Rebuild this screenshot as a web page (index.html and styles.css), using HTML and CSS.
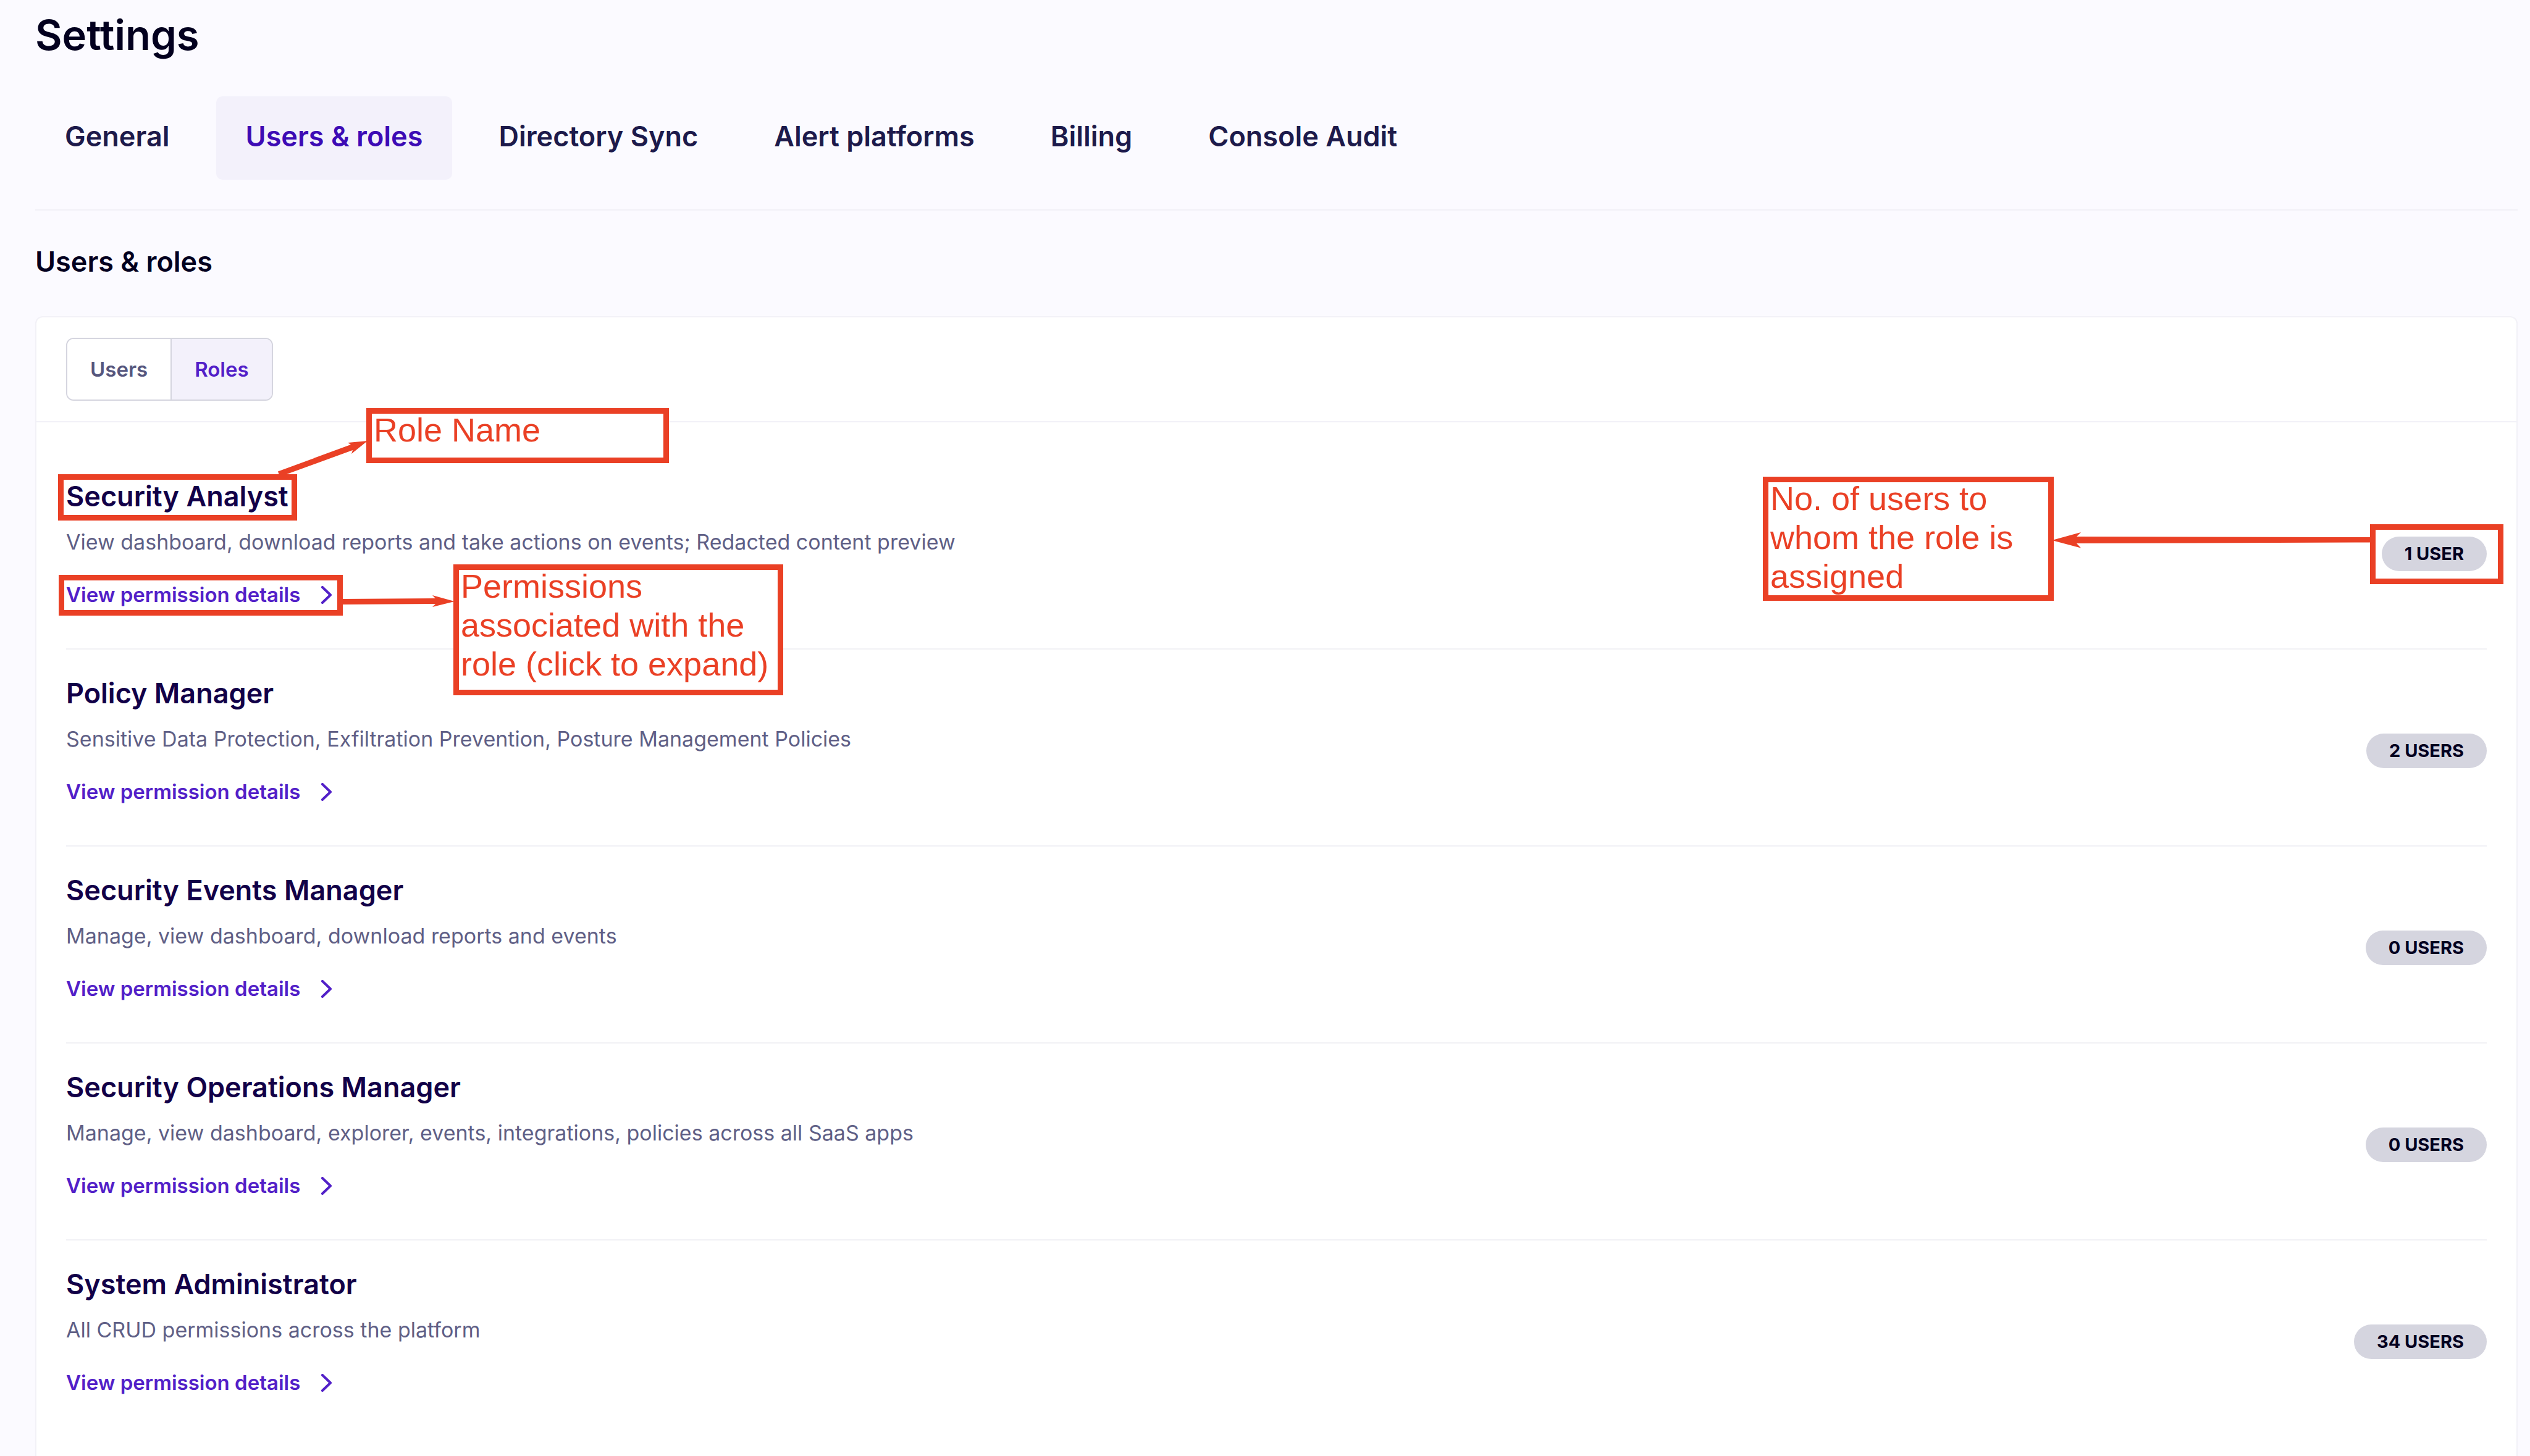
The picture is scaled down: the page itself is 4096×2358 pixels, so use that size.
FILE: index.html
```html
<!DOCTYPE html>
<html lang="en">
<head>
<meta charset="utf-8">
<meta name="viewport" content="width=device-width, initial-scale=1">
<title>Settings - Users &amp; roles</title>
<link rel="stylesheet" href="styles.css">
</head>
<body>
<div class="page">
  <header class="page-header">
    <h1 class="page-title">Settings</h1>
    <nav class="tabs" aria-label="Settings sections">
      <a class="tab" href="#general">General</a>
      <a class="tab tab-active" href="#users-roles" aria-current="page">Users &amp; roles</a>
      <a class="tab" href="#directory-sync">Directory Sync</a>
      <a class="tab" href="#alert-platforms">Alert platforms</a>
      <a class="tab" href="#billing">Billing</a>
      <a class="tab" href="#console-audit">Console Audit</a>
    </nav>
  </header>

  <main class="content">
    <h2 class="section-title">Users &amp; roles</h2>
    <section class="card">
      <div class="card-header">
        <div class="segment">
          <button class="segment-item" type="button">Users</button>
          <button class="segment-item segment-active" type="button" aria-pressed="true">Roles</button>
        </div>
      </div>
      <ul class="roles">
        <li class="role">
          <div class="role-body">
            <h3 class="role-name">Security Analyst</h3>
            <p class="role-text">View dashboard, download reports and take actions on events; Redacted content preview</p>
            <a class="role-link" href="#security-analyst">View permission details
              <svg class="chevron" viewBox="0 0 17 29" aria-hidden="true"><path d="M2 2 15 14.500 2 27"/></svg></a>
          </div>
          <span class="badge">1 USER</span>
        </li>
        <li class="role">
          <div class="role-body">
            <h3 class="role-name">Policy Manager</h3>
            <p class="role-text">Sensitive Data Protection, Exfiltration Prevention, Posture Management Policies</p>
            <a class="role-link" href="#policy-manager">View permission details
              <svg class="chevron" viewBox="0 0 17 29" aria-hidden="true"><path d="M2 2 15 14.500 2 27"/></svg></a>
          </div>
          <span class="badge">2 USERS</span>
        </li>
        <li class="role">
          <div class="role-body">
            <h3 class="role-name">Security Events Manager</h3>
            <p class="role-text">Manage, view dashboard, download reports and events</p>
            <a class="role-link" href="#security-events-manager">View permission details
              <svg class="chevron" viewBox="0 0 17 29" aria-hidden="true"><path d="M2 2 15 14.500 2 27"/></svg></a>
          </div>
          <span class="badge">0 USERS</span>
        </li>
        <li class="role">
          <div class="role-body">
            <h3 class="role-name">Security Operations Manager</h3>
            <p class="role-text">Manage, view dashboard, explorer, events, integrations, policies across all SaaS apps</p>
            <a class="role-link" href="#security-operations-manager">View permission details
              <svg class="chevron" viewBox="0 0 17 29" aria-hidden="true"><path d="M2 2 15 14.500 2 27"/></svg></a>
          </div>
          <span class="badge">0 USERS</span>
        </li>
        <li class="role">
          <div class="role-body">
            <h3 class="role-name">System Administrator</h3>
            <p class="role-text">All CRUD permissions across the platform</p>
            <a class="role-link" href="#system-administrator">View permission details
              <svg class="chevron" viewBox="0 0 17 29" aria-hidden="true"><path d="M2 2 15 14.500 2 27"/></svg></a>
          </div>
          <span class="badge">34 USERS</span>
        </li>
      </ul>
    </section>
  </main>

  <!-- Red call-outs laid over the page -->
  <svg class="arrow arrow-name" viewBox="0 0 150 62" aria-hidden="true"><path d="M3 51.500 121 8 116 5 148 2 122 23 124 17 6 60Z"/></svg>
  <svg class="arrow arrow-link" viewBox="0 0 190 24" aria-hidden="true"><path d="M0 8 155 7 150 2 186 12 150 21 155 16 0 17Z"/></svg>
  <svg class="arrow arrow-users" viewBox="0 0 520 30" aria-hidden="true"><path d="M2 15 49 2 42 9 520 10 520 18.500 42 20 49 27.500Z"/></svg>
  <div class="mark mark-name"></div>
  <div class="mark mark-link"></div>
  <div class="mark mark-users"></div>
  <div class="mark note note-name"><p class="note-text">Role Name</p></div>
  <div class="mark note note-link"><p class="note-text">Permissions<br>associated with the<br>role (click to expand)</p></div>
  <div class="mark note note-users"><p class="note-text">No. of users to<br>whom the role is<br>assigned</p></div>
</div>
</body>
</html>
```
FILE: styles.css
```css
* {
  box-sizing: border-box;
}

body,
h1,
h2,
h3,
p,
ul {
  margin: 0;
  padding: 0;
}

body {
  background: #fbfaff;
  color: #03001f;
  font-family: Inter, "Liberation Sans", sans-serif;
}

a {
  text-decoration: none;
}

.page {
  position: relative;
  display: flex;
  flex-direction: column;
  min-height: 100vh;
  padding: 17px 20px 0 57px;
}

/* Header and tabs */

.page-header {
  padding-bottom: 48px;
  border-bottom: 2px solid #f2f1f7;
}

.page-title {
  margin-bottom: 59px;
  font-size: 67px;
  font-weight: 600;
  line-height: 80px;
}

.tabs {
  display: flex;
  gap: 27px;
}

.tab {
  padding: 37px 48px 42px;
  border-radius: 10px;
  color: #1d1a4b;
  font-size: 45px;
  font-weight: 600;
  line-height: 56px;
}

.tab-active {
  background: #f3f1fb;
  color: #3d0bb5;
}

/* Card */

.content {
  display: flex;
  flex: 1;
  flex-direction: column;
  padding-top: 55px;
}

.section-title {
  margin-bottom: 60px;
  font-size: 45px;
  font-weight: 600;
  line-height: 56px;
}

.card {
  flex: 1;
  border: 2px solid #f2f1f7;
  border-bottom: 0;
  border-radius: 12px 12px 0 0;
  background: #fff;
}

.card-header {
  display: flex;
  padding: 33px 48px;
  border-bottom: 2px solid #f2f1f7;
}

.segment {
  display: flex;
  overflow: hidden;
  border: 2px solid #d5d5df;
  border-radius: 12px;
}

.segment-item {
  padding: 27px 37px;
  border: 0;
  background: #fff;
  color: #56567d;
  font-family: inherit;
  font-size: 33px;
  font-weight: 600;
  line-height: 44px;
}

.segment-active {
  border-left: 2px solid #d5d5df;
  background: #f3f1fb;
  color: #5220c8;
}

/* Role list */

.roles {
  padding: 49px 48px 0;
  list-style: none;
}

.role {
  display: flex;
  align-items: center;
  justify-content: space-between;
  border-bottom: 2px solid #f1f1f5;
}

.role:last-child {
  border-bottom: 0;
}

.role-body {
  display: flex;
  flex-direction: column;
  align-items: flex-start;
  padding: 43px 0 65px;
}

.role-name {
  margin-bottom: 24px;
  color: #120048;
  font-size: 45px;
  font-weight: 600;
  line-height: 56px;
}

.role-text {
  margin-bottom: 41px;
  color: #5f5f86;
  font-size: 34px;
  line-height: 44px;
}

.role-link {
  display: flex;
  align-items: center;
  gap: 34px;
  color: #5220c8;
  font-size: 33px;
  font-weight: 600;
  line-height: 44px;
}

.chevron {
  width: 17px;
  height: 29px;
  fill: none;
  stroke: currentColor;
  stroke-width: 4;
  stroke-linecap: round;
  stroke-linejoin: round;
}

.badge {
  margin-top: 10px;
  padding: 0 37px;
  border-radius: 28px;
  background: #d5d5df;
  font-size: 29px;
  font-weight: 700;
  line-height: 56px;
}

/* Call-outs */

.mark {
  position: absolute;
  border: 9px solid #ea4025;
}

.mark-name {
  top: 768px;
  left: 94px;
  width: 387px;
  height: 75px;
}

.mark-link {
  top: 931px;
  left: 95px;
  width: 460px;
  height: 66px;
}

.mark-users {
  top: 849px;
  right: 43px;
  width: 216px;
  height: 97px;
}

.note {
  padding-left: 3px;
  background: #fff;
  color: #ea4025;
  font-family: "Liberation Sans", Arial, sans-serif;
  font-size: 54px;
  line-height: 63px;
  white-space: nowrap;
}

.note-text {
  margin-top: -5px;
}

.note-name {
  top: 661px;
  left: 593px;
  width: 490px;
  height: 89px;
}

.note-link {
  top: 914px;
  left: 734px;
  width: 534px;
  height: 212px;
}

.note-users {
  top: 772px;
  right: 771px;
  width: 471px;
  height: 201px;
}

.arrow {
  position: absolute;
  fill: #ea4025;
}

.arrow-name {
  top: 712px;
  left: 447px;
  width: 150px;
  height: 62px;
}

.arrow-link {
  top: 962px;
  left: 550px;
  width: 190px;
  height: 24px;
}

.arrow-users {
  top: 860px;
  right: 256px;
  width: 520px;
  height: 30px;
}
```
